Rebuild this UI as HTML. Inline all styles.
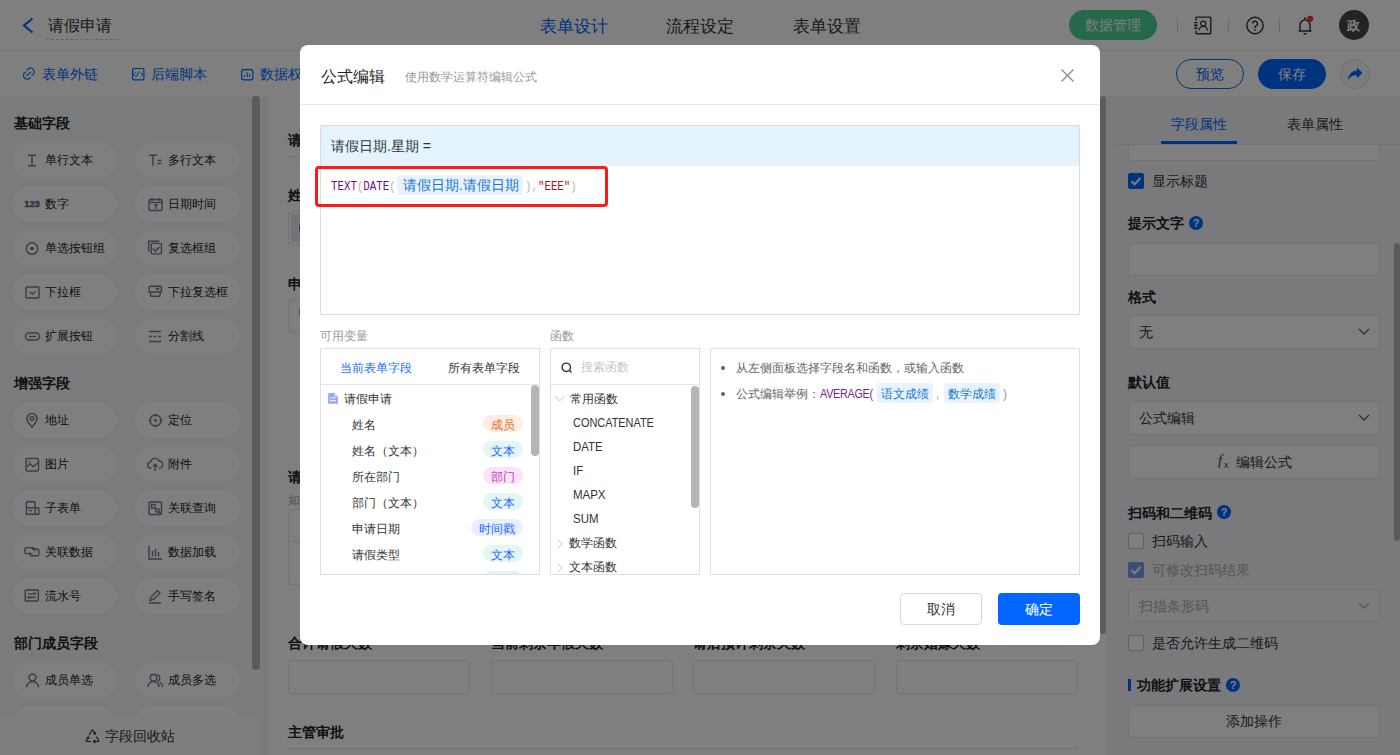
<!DOCTYPE html>
<html><head><meta charset="utf-8">
<style>
*{box-sizing:border-box;margin:0;padding:0}
html,body{width:1400px;height:755px;overflow:hidden}
body{position:relative;font-family:"Liberation Sans",sans-serif;background:#fff;color:#333}
.a{position:absolute;white-space:nowrap}
.t12{font-size:12px;line-height:12px}
.t14{font-size:14px;line-height:14px}
.t16{font-size:16px;line-height:16px}
.b{font-weight:bold}
svg{position:absolute;overflow:visible}
/* left chips */
.chip{position:absolute;width:105px;height:34px;border-radius:17px;background:#fff}
.chip span{position:absolute;left:33px;top:11px;font-size:12px;line-height:12px;color:#222;white-space:nowrap}
.chip svg{left:16px;top:12px}
.inp{position:absolute;border:1px solid #e3e4e8;border-radius:4px;background:#fff}
.chk{position:absolute;width:16px;height:16px;border:1px solid #b8bcc6;border-radius:2px;background:#fff}
.chk.on{background:#0066ff;border-color:#0066ff}
.q{position:absolute;width:14px;height:14px;border-radius:7px;background:#0066ff;color:#fff;font-size:11px;line-height:14px;text-align:center;font-weight:bold}
.tag{position:absolute;height:17px;border-radius:8.5px;font-size:12px;line-height:12px;padding-top:4px;text-align:center;overflow:hidden}
</style></head><body>

<!-- HEADER -->
<div class="a" style="left:0;top:0;width:1400px;height:51px;border-bottom:1px solid #e8e8e8;background:#fff"></div>
<svg style="left:0;top:0" width="40" height="50"><polyline points="32.5,18.5 24,25.5 32.5,32.5" fill="none" stroke="#0066ff" stroke-width="2.2"/></svg>
<div class="a t16" style="left:48px;top:18px;color:#333">请假申请</div>
<div class="a" style="left:46px;top:39px;width:72px;border-top:1px dashed #c9c9c9"></div>
<div class="a" style="left:540px;top:18px;font-size:16.6px;line-height:17px;color:#0066ff">表单设计</div>
<div class="a" style="left:666px;top:18px;font-size:16.6px;line-height:17px;">流程设定</div>
<div class="a" style="left:793px;top:18px;font-size:16.6px;line-height:17px;">表单设置</div>

<div class="a" style="left:1069px;top:10px;width:88px;height:30px;border-radius:15px;background:#4cd094"></div>
<div class="a t14" style="left:1085px;top:18px;color:#fff">数据管理</div>
<div class="a" style="left:1177px;top:18px;width:1px;height:14px;background:#d5d5d5"></div>
<div class="a" style="left:1228px;top:18px;width:1px;height:14px;background:#d5d5d5"></div>
<div class="a" style="left:1279px;top:18px;width:1px;height:14px;background:#d5d5d5"></div>
<svg style="left:1190px;top:14px" width="24" height="24"><path d="M5.9 6.8V4.1a1 1 0 0 1 1-1h12.9a1 1 0 0 1 1 1v14.7a1 1 0 0 1-1 1H6.9a1 1 0 0 1-1-1v-2.4M5.9 10v0.8M5.9 13.2v0.8" fill="none" stroke="#333" stroke-width="1.4"/><path d="M4 8.7h3.7M4 11.5h3.7M4 14.3h3.7" stroke="#333" stroke-width="1.3"/><circle cx="13.3" cy="9.6" r="2.5" fill="none" stroke="#333" stroke-width="1.3"/><path d="M9.1 16.6a4.2 4.2 0 0 1 8.4 0" fill="none" stroke="#333" stroke-width="1.3"/></svg>
<svg style="left:1246px;top:17px" width="18" height="18"><circle cx="9" cy="8.5" r="8.2" fill="none" stroke="#333" stroke-width="1.4"/><path d="M6.6 6.6a2.4 2.4 0 1 1 3.4 2.2c-0.7 0.4-1 0.8-1 1.6v0.6" fill="none" stroke="#333" stroke-width="1.4"/><circle cx="9" cy="12.9" r="0.9" fill="#333"/></svg>
<svg style="left:1296px;top:15px" width="20" height="22"><path d="M2.5 16h13M4 16V10a5 5 0 0 1 10 0v6M7.5 18.8h3" fill="none" stroke="#333" stroke-width="1.4"/><circle cx="9" cy="3.2" r="1" fill="#333"/><circle cx="14.2" cy="3.8" r="3.1" fill="#e03a3a"/></svg>
<div class="a" style="left:1339px;top:10px;width:30px;height:30px;border-radius:15px;background:#464646"></div>
<div class="a" style="left:1347px;top:19px;font-size:13px;line-height:13px;color:#fff;font-weight:bold;font-family:'Liberation Serif',serif">政</div>

<!-- TOOLBAR -->
<div class="a" style="left:0;top:51px;width:1400px;height:45px;background:#fff"></div>
<svg style="left:22px;top:67px" width="14" height="14"><path d="M4.9 3.4A3.8 3.8 0 1 1 10 8.3M8.4 10.6A3.8 3.8 0 1 1 3.3 5.2M4.6 8.7L8.7 5.2" fill="none" stroke="#0066ff" stroke-width="1.1" stroke-linecap="round"/></svg>
<div class="a t14" style="left:42px;top:67px;color:#0066ff">表单外链</div>
<svg style="left:132px;top:68px" width="13" height="13"><rect x="0.6" y="0.5" width="11.3" height="11.3" rx="1.2" fill="none" stroke="#0066ff" stroke-width="1.2"/><path d="M3.6 4.2L1.2 6.4 4.3 8.6 7.3 3.2M8.5 4.5L11 6.4 8.8 8.5" fill="none" stroke="#0066ff" stroke-width="0.9"/></svg>
<div class="a t14" style="left:151px;top:67px;color:#0066ff">后端脚本</div>
<svg style="left:241px;top:69px" width="13" height="12"><rect x="0.6" y="0.6" width="11.3" height="10.3" rx="2.3" fill="none" stroke="#0066ff" stroke-width="1.2"/><path d="M3.4 8V6M6.3 8V3.2M8.6 8V4.8" fill="none" stroke="#0066ff" stroke-width="1"/></svg>
<div class="a t14" style="left:260px;top:67px;color:#0066ff">数据权限</div>
<div class="a" style="left:1176px;top:59px;width:68px;height:30px;border:1px solid #0066ff;border-radius:15px"></div>
<div class="a t14" style="left:1196px;top:67px;color:#0066ff">预览</div>
<div class="a" style="left:1258px;top:59px;width:68px;height:30px;border-radius:15px;background:#0066ff"></div>
<div class="a t14" style="left:1278px;top:67px;color:#fff">保存</div>
<div class="a" style="left:1340px;top:59px;width:30px;height:30px;border-radius:15px;border:1px solid #d6e2fb;background:#f2f6ff"></div>
<svg style="left:1345px;top:64px" width="20" height="20"><path d="M12 3.5L17.4 8.9 12 14.3V11.3C7.6 11.1 4.9 12.8 2.9 16 3.4 10.6 6.6 6.9 12 6.6Z" fill="#0066ff"/></svg>

<!-- LEFT PANEL -->
<div class="a" id="left" style="left:0;top:96px;width:262px;height:659px;background:#f5f6f9"></div>
<div class="a t14 b" style="left:14px;top:116px;color:#222">基础字段</div>
<div class="a t14 b" style="left:14px;top:376px;color:#222">增强字段</div>
<div class="a t14 b" style="left:14px;top:636px;color:#222">部门成员字段</div>
<div class="chip" style="left:12px;top:143px"><svg style="left:12px;top:9px" width="17" height="17" viewBox="0 0 17 17"><path d="M4 3.2h8M8 3.2v10.6M4 13.8h8" stroke="#6f7a92" stroke-width="1.4" fill="none" stroke-width="1.6"/></svg><span>单行文本</span></div>
<div class="chip" style="left:135px;top:143px"><svg style="left:12px;top:9px" width="17" height="17" viewBox="0 0 17 17"><path d="M2 3.2h8M6 3.2v10.6M10.5 8.5h4M10.5 11.5h4" stroke="#6f7a92" stroke-width="1.4" fill="none" stroke-width="1.5"/></svg><span>多行文本</span></div>
<div class="chip" style="left:12px;top:187px"><svg style="left:12px;top:9px" width="17" height="17" viewBox="0 0 17 17"><text x="0.3" y="10.8" style="font:bold 9.5px 'Liberation Sans';letter-spacing:-0.2px" fill="#5f6a80" stroke="#5f6a80" stroke-width="0.45">123</text></svg><span>数字</span></div>
<div class="chip" style="left:135px;top:187px"><svg style="left:12px;top:9px" width="17" height="17" viewBox="0 0 17 17"><rect x="2" y="3.5" width="13" height="11" rx="1.5" stroke="#6f7a92" stroke-width="1.4" fill="none"/><path d="M2 6.5h13M5 2v3M12 2v3M7 9h3l-1.8 4" stroke="#6f7a92" stroke-width="1.4" fill="none"/></svg><span>日期时间</span></div>
<div class="chip" style="left:12px;top:231px"><svg style="left:12px;top:9px" width="17" height="17" viewBox="0 0 17 17"><circle cx="8" cy="8.5" r="5.8" stroke="#6f7a92" stroke-width="1.4" fill="none"/><circle cx="8" cy="8.5" r="1.8" fill="#6f7a92"/></svg><span>单选按钮组</span></div>
<div class="chip" style="left:135px;top:231px"><svg style="left:12px;top:9px" width="17" height="17" viewBox="0 0 17 17"><path d="M1.7 11.7V1.2h10.5" stroke="#6f7a92" stroke-width="1.4" fill="none"/><rect x="4.3" y="3.4" width="10.1" height="10.5" rx="1" stroke="#6f7a92" stroke-width="1.4" fill="none"/><path d="M5.8 8.6l2.5 2.7 4.3-4.6" stroke="#6f7a92" stroke-width="1.4" fill="none"/></svg><span>复选框组</span></div>
<div class="chip" style="left:12px;top:275px"><svg style="left:12px;top:9px" width="17" height="17" viewBox="0 0 17 17"><rect x="2" y="3" width="13" height="11" rx="1" stroke="#6f7a92" stroke-width="1.4" fill="none"/><path d="M5.5 7.5l3 2.5 3-2.5" stroke="#6f7a92" stroke-width="1.4" fill="none"/></svg><span>下拉框</span></div>
<div class="chip" style="left:135px;top:275px"><svg style="left:12px;top:9px" width="17" height="17" viewBox="0 0 17 17"><path d="M2.1 8V3.3a1 1 0 0 1 1-1h10.3a1 1 0 0 1 1 1V8zM3.5 8v3.3a1 1 0 0 0 1 1h7.6a1 1 0 0 0 1-1V8" stroke="#6f7a92" stroke-width="1.4" fill="none"/><path d="M8.9 3.8l1.6 1.8 1.6-1.8" stroke="#6f7a92" stroke-width="1.4" fill="none"/></svg><span>下拉复选框</span></div>
<div class="chip" style="left:12px;top:319px"><svg style="left:12px;top:9px" width="17" height="17" viewBox="0 0 17 17"><rect x="1.5" y="5" width="14" height="7" rx="3.5" stroke="#6f7a92" stroke-width="1.4" fill="none"/><path d="M5 8.5h7" stroke="#6f7a92" stroke-width="1.4" fill="none"/></svg><span>扩展按钮</span></div>
<div class="chip" style="left:135px;top:319px"><svg style="left:12px;top:9px" width="17" height="17" viewBox="0 0 17 17"><path d="M2 3.5h12M2 8.5h3M6.5 8.5h3M11 8.5h3M2 13.5h12" stroke="#6f7a92" stroke-width="1.4" fill="none"/></svg><span>分割线</span></div>
<div class="chip" style="left:12px;top:403px"><svg style="left:12px;top:9px" width="17" height="17" viewBox="0 0 17 17"><path d="M8 15s-5-5-5-8.5a5 5 0 0 1 10 0C13 10 8 15 8 15z" stroke="#6f7a92" stroke-width="1.4" fill="none"/><circle cx="8" cy="6.5" r="1.8" stroke="#6f7a92" stroke-width="1.4" fill="none"/></svg><span>地址</span></div>
<div class="chip" style="left:135px;top:403px"><svg style="left:12px;top:9px" width="17" height="17" viewBox="0 0 17 17"><circle cx="8.5" cy="8.5" r="5.5" stroke="#6f7a92" stroke-width="1.4" fill="none"/><circle cx="8.5" cy="8.5" r="1.4" fill="#6f7a92"/><path d="M8.5 1.5v3M8.5 12.5v3M1.5 8.5h3M12.5 8.5h3" stroke="#6f7a92" stroke-width="1.4" fill="none"/></svg><span>定位</span></div>
<div class="chip" style="left:12px;top:447px"><svg style="left:12px;top:9px" width="17" height="17" viewBox="0 0 17 17"><rect x="2" y="2.5" width="12.5" height="12.5" rx="1.5" stroke="#6f7a92" stroke-width="1.4" fill="none"/><path d="M2.5 11l3.5-3 3 2.5 5.5-4" stroke="#6f7a92" stroke-width="1.4" fill="none"/><circle cx="5.3" cy="5.8" r="0.9" fill="#6f7a92"/></svg><span>图片</span></div>
<div class="chip" style="left:135px;top:447px"><svg style="left:12px;top:9px" width="17" height="17" viewBox="0 0 17 17"><path d="M4.5 12H4a3 3 0 0 1-0.5-6A4.5 4.5 0 0 1 12 5a3.5 3.5 0 0 1 0.5 7H12M8.2 15V8.5M6 10.5l2.2-2.2 2.2 2.2" stroke="#6f7a92" stroke-width="1.4" fill="none"/></svg><span>附件</span></div>
<div class="chip" style="left:12px;top:491px"><svg style="left:12px;top:9px" width="17" height="17" viewBox="0 0 17 17"><path d="M2.4 14.2V2.8a1 1 0 0 1 1-1h6.7a1 1 0 0 1 1 1v11.4zM11.1 7.7h2.7a1 1 0 0 1 1 1v5.5h-3.7M2.4 7.7h8.7M4.6 10.6h3.6" stroke="#6f7a92" stroke-width="1.4" fill="none"/></svg><span>子表单</span></div>
<div class="chip" style="left:135px;top:491px"><svg style="left:12px;top:9px" width="17" height="17" viewBox="0 0 17 17"><rect x="2" y="2" width="12.5" height="12.5" rx="1" stroke="#6f7a92" stroke-width="1.4" fill="none"/><rect x="4.5" y="4.5" width="3.5" height="3.5" stroke="#6f7a92" stroke-width="1.4" fill="none"/><circle cx="10.5" cy="10.5" r="1.8" stroke="#6f7a92" stroke-width="1.4" fill="none"/><path d="M11.8 11.8l2 2" stroke="#6f7a92" stroke-width="1.4" fill="none"/></svg><span>关联查询</span></div>
<div class="chip" style="left:12px;top:535px"><svg style="left:12px;top:9px" width="17" height="17" viewBox="0 0 17 17"><path d="M8.5 9.6H2.2a1.3 1.3 0 0 1-1.3-1.3V5a1.3 1.3 0 0 1 1.3-1.3h6.9A1.3 1.3 0 0 1 10.4 5v2.2M8 5.2h5.5a1.3 1.3 0 0 1 1.3 1.3v4a1.3 1.3 0 0 1-1.3 1.3H7.3A1.3 1.3 0 0 1 6 10.5V8.3" stroke="#6f7a92" stroke-width="1.4" fill="none"/></svg><span>关联数据</span></div>
<div class="chip" style="left:135px;top:535px"><svg style="left:12px;top:9px" width="17" height="17" viewBox="0 0 17 17"><path d="M2 2v13h13M5.5 7v5.5M8.5 5v7.5M11.5 8v4.5" stroke="#6f7a92" stroke-width="1.4" fill="none"/></svg><span>数据加载</span></div>
<div class="chip" style="left:12px;top:579px"><svg style="left:12px;top:9px" width="17" height="17" viewBox="0 0 17 17"><rect x="1.2" y="2" width="13.1" height="11" rx="1" stroke="#6f7a92" stroke-width="1.4" fill="none"/><path d="M4 5.9h7.5l-1.6-1.5M11.5 9.3H4l1.6 1.5" stroke="#6f7a92" stroke-width="1.4" fill="none"/></svg><span>流水号</span></div>
<div class="chip" style="left:135px;top:579px"><svg style="left:12px;top:9px" width="17" height="17" viewBox="0 0 17 17"><path d="M3 12.5l1-3.5 6.5-6.5 2.5 2.5-6.5 6.5zM2 15h12" stroke="#6f7a92" stroke-width="1.4" fill="none"/></svg><span>手写签名</span></div>
<div class="chip" style="left:12px;top:663px"><svg style="left:12px;top:9px" width="17" height="17" viewBox="0 0 17 17"><circle cx="8.5" cy="5.5" r="3.5" stroke="#6f7a92" stroke-width="1.4" fill="none"/><path d="M2.5 15.5a6 6 0 0 1 12 0" stroke="#6f7a92" stroke-width="1.4" fill="none"/></svg><span>成员单选</span></div>
<div class="chip" style="left:135px;top:663px"><svg style="left:12px;top:9px" width="17" height="17" viewBox="0 0 17 17"><circle cx="6.5" cy="5.8" r="3.3" stroke="#6f7a92" stroke-width="1.4" fill="none"/><path d="M1 15a5.5 5.5 0 0 1 11 0M10 2.6a3.3 3.3 0 0 1 0.5 6.4M12.5 10a5.5 5.5 0 0 1 3 5" stroke="#6f7a92" stroke-width="1.4" fill="none"/></svg><span>成员多选</span></div>
<div class="chip" style="left:12px;top:707px"><svg style="left:12px;top:9px" width="17" height="17" viewBox="0 0 17 17"></svg><span>部门单选</span></div>
<div class="chip" style="left:135px;top:707px"><svg style="left:12px;top:9px" width="17" height="17" viewBox="0 0 17 17"></svg><span>部门多选</span></div>
<div class="a" style="left:0;top:717px;width:260px;height:38px;background:#fafbfc"></div>
<svg style="left:84px;top:728px" width="17" height="17" viewBox="0 0 17 17"><path d="M5 7.2L7.8 2.5c.3-.5.9-.5 1.2 0L11.2 6M9.4 5.6l1.8.5.5-1.9M12.4 8.6l2.2 3.8c.3.5 0 1.1-.6 1.1H9.6M11.2 11.9l-1.6 1.6 1.6 1.5M6.8 13.5H3c-.6 0-.9-.6-.6-1.1L4.4 9M2.7 9.8l1.7-.8.8 1.7" fill="none" stroke="#333" stroke-width="1.2"/></svg>
<div class="a t14" style="left:105px;top:729px;color:#333">字段回收站</div>

<div class="a" style="left:252px;top:96px;width:8px;height:574px;border-radius:4px;background:#b4b4b4"></div>

<!-- CENTER -->
<div class="a" style="left:262px;top:96px;width:838px;height:659px;background:#f3f4f7"></div>
<div class="a" style="left:268px;top:96px;width:838px;height:659px;background:#fff"></div>
<div class="a t14 b" style="left:288px;top:133px;color:#222">请假信息</div>
<div class="a" style="left:288px;top:156px;width:790px;height:1px;background:#e6e6e6"></div>
<div class="a t14 b" style="left:288px;top:188px;color:#222">姓名</div>
<div class="a" style="left:288px;top:211px;width:380px;height:34px;border:1px dashed #d6d8dd;border-radius:4px"></div>
<div class="a" style="left:291px;top:214px;width:120px;height:28px;border-radius:3px;background:#eee2f4"></div>
<div class="a" style="left:299px;top:224px;width:4px;height:8px;border-radius:2px;background:#2fa86a"></div>
<div class="a t14 b" style="left:288px;top:277px;color:#222">申请日期</div>
<div class="inp" style="left:288px;top:299px;width:380px;height:34px"></div>
<div class="a" style="left:299px;top:309px;width:1px;height:6px;background:#f0a040"></div>
<div class="a t14 b" style="left:288px;top:470px;color:#222">请假事由</div>
<div class="a t12" style="left:288px;top:494px;color:#aaa">如：家中有事</div>
<div class="inp" style="left:288px;top:509px;width:790px;height:76px"></div>
<div class="a" style="left:289px;top:541px;width:788px;height:1px;background:#e6e6e6"></div>
<div class="a t14 b" style="left:288px;top:636px;color:#222">合计请假天数</div>
<div class="inp" style="left:288px;top:660px;width:182px;height:34px"></div>
<div class="a t14 b" style="left:491px;top:636px;color:#222">当前剩余年假天数</div>
<div class="inp" style="left:491px;top:660px;width:182px;height:34px"></div>
<div class="a t14 b" style="left:693px;top:636px;color:#222">请后预计剩余天数</div>
<div class="inp" style="left:693px;top:660px;width:182px;height:34px"></div>
<div class="a t14 b" style="left:896px;top:636px;color:#222">剩余婚嫁天数</div>
<div class="inp" style="left:896px;top:660px;width:182px;height:34px"></div>
<div class="a t14 b" style="left:288px;top:725px;color:#222">主管审批</div>
<div class="a" style="left:288px;top:748px;width:790px;height:1px;background:#e6e6e6"></div>

<div class="a" style="left:1100px;top:96px;width:6px;height:538px;border-radius:3px;background:#b9b9b9"></div>

<!-- RIGHT PANEL -->
<div class="a" style="left:1106px;top:96px;width:294px;height:659px;background:#f4f5f8"></div>
<div class="inp" style="left:1128px;top:120px;width:252px;height:41px"></div>
<div class="a" style="left:1106px;top:96px;width:288px;height:48px;background:#f4f5f8"></div>
<div class="a t14" style="left:1171px;top:117px;color:#0066ff">字段属性</div>
<div class="a t14" style="left:1287px;top:117px;color:#333">表单属性</div>
<div class="a" style="left:1114px;top:144px;width:286px;height:1px;background:#e2e4e9"></div>
<div class="a" style="left:1161px;top:141px;width:76px;height:3px;background:#0066ff"></div>
<div class="chk on" style="left:1128px;top:173px"></div><svg style="left:1128px;top:173px" width="16" height="16"><path d="M3.5 8.2l3 3 6-6.2" fill="none" stroke="#fff" stroke-width="2"/></svg>
<div class="a t14" style="left:1152px;top:174px;color:#333">显示标题</div>
<div class="a t14 b" style="left:1128px;top:216px;color:#222">提示文字</div>
<div class="q" style="left:1189px;top:216px">?</div>
<div class="inp" style="left:1128px;top:243px;width:252px;height:33px"></div>
<div class="a t14 b" style="left:1128px;top:290px;color:#222">格式</div>
<div class="inp" style="left:1128px;top:315px;width:252px;height:34px"></div>
<div class="a t14" style="left:1139px;top:325px;color:#333">无</div>
<svg style="left:1358px;top:328px" width="12" height="8"><path d="M1 1l5 5 5-5" fill="none" stroke="#666" stroke-width="1.3"/></svg>
<div class="a t14 b" style="left:1128px;top:375px;color:#222">默认值</div>
<div class="inp" style="left:1128px;top:401px;width:252px;height:34px"></div>
<div class="a t14" style="left:1139px;top:411px;color:#333">公式编辑</div>
<svg style="left:1358px;top:414px" width="12" height="8"><path d="M1 1l5 5 5-5" fill="none" stroke="#666" stroke-width="1.3"/></svg>
<div class="inp" style="left:1128px;top:445px;width:252px;height:34px"></div>
<div class="a" style="left:1218px;top:453px;font-size:15px;line-height:15px;font-style:italic;font-family:'Liberation Serif',serif;color:#444">f</div><div class="a" style="left:1224px;top:461px;font-size:9px;line-height:9px;color:#444">x</div>
<div class="a t14" style="left:1236px;top:455px;color:#333">编辑公式</div>
<div class="a t14 b" style="left:1128px;top:506px;color:#222">扫码和二维码</div>
<div class="q" style="left:1217px;top:505px">?</div>
<div class="chk" style="left:1128px;top:533px"></div>
<div class="a t14" style="left:1152px;top:534px;color:#333">扫码输入</div>
<div class="chk on" style="left:1128px;top:562px;background:#7a9be6;border-color:#7a9be6"></div><svg style="left:1128px;top:562px" width="16" height="16"><path d="M3.5 8.2l3 3 6-6.2" fill="none" stroke="#fff" stroke-width="2"/></svg>
<div class="a t14" style="left:1152px;top:563px;color:#a8abb2">可修改扫码结果</div>
<div class="inp" style="left:1128px;top:589px;width:252px;height:33px;background:#f7f8fa"></div>
<div class="a t14" style="left:1139px;top:599px;color:#a8abb2">扫描条形码</div>
<svg style="left:1358px;top:602px" width="12" height="8"><path d="M1 1l5 5 5-5" fill="none" stroke="#b0b0b0" stroke-width="1.3"/></svg>
<div class="chk" style="left:1128px;top:635px"></div>
<div class="a t14" style="left:1152px;top:636px;color:#333">是否允许生成二维码</div>
<div class="a" style="left:1128px;top:679px;width:3px;height:12px;background:#0066ff"></div>
<div class="a t14 b" style="left:1137px;top:678px;color:#222">功能扩展设置</div>
<div class="q" style="left:1226px;top:678px">?</div>
<div class="inp" style="left:1128px;top:705px;width:252px;height:33px"></div>
<div class="a t14" style="left:1226px;top:714px;color:#333">添加操作</div>
<div class="a" style="left:1394px;top:243px;width:6px;height:298px;border-radius:3px;background:#b4b4b4"></div>


<!-- OVERLAY -->
<div class="a" style="left:0;top:0;width:1400px;height:755px;background:rgba(0,0,0,0.5)"></div>

<!-- MODAL -->
<div class="a" id="modal" style="left:300px;top:45px;width:800px;height:600px;border-radius:8px;background:#fff"></div>
<div class="a t16" style="left:321px;top:69px;color:#262626">公式编辑</div>
<div class="a t12" style="left:405px;top:71px;color:#999">使用数学运算符编辑公式</div>
<svg style="left:1060px;top:68px" width="15" height="15"><path d="M1.5 1.5l12 12M13.5 1.5l-12 12" stroke="#8c8c8c" stroke-width="1.3"/></svg>
<div class="a" style="left:300px;top:104px;width:800px;height:1px;background:#e8e8e8"></div>
<div class="a" style="left:320px;top:125px;width:760px;height:190px;border:1px solid #dcdcdc"></div>
<div class="a" style="left:321px;top:126px;width:758px;height:40px;background:#e5f3fe"></div>
<div class="a t14" style="left:331px;top:139px;color:#333">请假日期.星期 =</div>
<div class="a" style="left:331px;top:181px;font-family:'Liberation Mono',monospace;font-size:12.4px;line-height:12px;transform:scaleX(0.87);transform-origin:0 0"><span style="color:#680f8a">TEXT</span><span style="color:#c8b496">(</span><span style="color:#680f8a">DATE</span><span style="color:#c8b496">(</span></div>
<div class="a" style="left:397px;top:175px;width:126px;height:20px;border-radius:3px;background:#e8f3ff"></div>
<div class="a t14" style="left:403px;top:178px;color:#1677d2">请假日期.请假日期</div>
<div class="a" style="left:525px;top:181px;font-family:'Liberation Mono',monospace;font-size:12.4px;line-height:12px;transform:scaleX(0.87);transform-origin:0 0"><span style="color:#c8b496">),</span><span style="color:#a31515">"EEE"</span><span style="color:#c8b496">)</span></div>
<div class="a" style="left:315px;top:166px;width:293px;height:41px;border:3px solid #ff1a1a;border-radius:4px"></div>
<div class="a t12" style="left:320px;top:330px;color:#999">可用变量</div>
<div class="a t12" style="left:550px;top:330px;color:#999">函数</div>
<div class="a" style="left:320px;top:348px;width:220px;height:227px;border:1px solid #e0e0e0"></div>
<div class="a t12" style="left:340px;top:362px;color:#1a6dff">当前表单字段</div>
<div class="a t12" style="left:448px;top:362px;color:#333">所有表单字段</div>
<div class="a" style="left:321px;top:384px;width:218px;height:1px;background:#e6e6e6"></div>
<div class="a" style="left:531px;top:385px;width:8px;height:71px;border-radius:4px;background:#b5b5b5"></div>
<svg style="left:327px;top:392px" width="12" height="13"><path d="M1.1 1H7.3L10.9 4.6V11.8H1.1z" fill="#9aa8fb"/><path d="M7.3 1V4.6H10.9z" fill="#d4dafd"/><path d="M2.9 5.9h2.3M6 5.9h2.4M2.9 8.7h6" stroke="#fff" stroke-width="1"/></svg>
<div class="a t12" style="left:344px;top:393px;color:#333">请假申请</div>
<div class="a t12" style="left:352px;top:419px;color:#333">姓名</div>
<div class="tag" style="left:483px;top:415px;width:40px;color:#f06a1a;background:#fdeee4">成员</div>
<div class="a t12" style="left:352px;top:445px;color:#333">姓名（文本）</div>
<div class="tag" style="left:483px;top:441px;width:40px;color:#1f66ff;background:#e4f6f4">文本</div>
<div class="a t12" style="left:352px;top:471px;color:#333">所在部门</div>
<div class="tag" style="left:483px;top:467px;width:40px;color:#d02fc4;background:#fbe4f8">部门</div>
<div class="a t12" style="left:352px;top:497px;color:#333">部门（文本）</div>
<div class="tag" style="left:483px;top:493px;width:40px;color:#1f66ff;background:#e4f6f4">文本</div>
<div class="a t12" style="left:352px;top:523px;color:#333">申请日期</div>
<div class="tag" style="left:471px;top:519px;width:52px;color:#1f66ff;background:#e8f0ff">时间戳</div>
<div class="a t12" style="left:352px;top:549px;color:#333">请假类型</div>
<div class="tag" style="left:483px;top:545px;width:40px;color:#1f66ff;background:#e4f6f4">文本</div>
<div class="a t12" style="left:352px;top:575px;color:#333">请假天数</div>
<div class="tag" style="left:483px;top:571px;width:40px;color:#1f66ff;background:#e4f6f4">文本</div>
<div class="a" style="left:321px;top:574px;width:218px;height:20px;background:#fff"></div>
<div class="a" style="left:320px;top:574px;width:220px;height:1px;background:#e0e0e0"></div>
<div class="a" style="left:550px;top:348px;width:150px;height:227px;border:1px solid #e0e0e0"></div>
<svg style="left:561px;top:362px" width="13" height="13"><circle cx="5.3" cy="5.3" r="4.2" fill="none" stroke="#333" stroke-width="1.4"/><path d="M8.3 8.3l2.2 2.2" stroke="#333" stroke-width="1.4"/></svg>
<div class="a t12" style="left:581px;top:361px;color:#c8c8c8">搜索函数</div>
<div class="a" style="left:551px;top:384px;width:148px;height:1px;background:#e6e6e6"></div>
<div class="a" style="left:691px;top:386px;width:8px;height:122px;border-radius:4px;background:#b5b5b5"></div>
<svg style="left:554px;top:395px" width="12" height="8"><path d="M1 1l4.7 5 4.7-5" fill="none" stroke="#c8c8c8" stroke-width="1"/></svg>
<div class="a t12" style="left:570px;top:393px;color:#333">常用函数</div>
<div class="a t12" style="left:573px;top:417px;color:#333;transform:scaleX(0.91);transform-origin:0 0">CONCATENATE</div>
<div class="a t12" style="left:573px;top:441px;color:#333;transform:scaleX(0.955);transform-origin:0 0">DATE</div>
<div class="a t12" style="left:573px;top:465px;color:#333;transform:scaleX(0.955);transform-origin:0 0">IF</div>
<div class="a t12" style="left:573px;top:489px;color:#333;transform:scaleX(0.955);transform-origin:0 0">MAPX</div>
<div class="a t12" style="left:573px;top:513px;color:#333;transform:scaleX(0.955);transform-origin:0 0">SUM</div>
<svg style="left:556px;top:539px" width="8" height="10"><path d="M2 1l4 4-4 4" fill="none" stroke="#c8c8c8" stroke-width="1"/></svg>
<div class="a t12" style="left:569px;top:537px;color:#333">数学函数</div>
<svg style="left:556px;top:563px" width="8" height="10"><path d="M2 1l4 4-4 4" fill="none" stroke="#c8c8c8" stroke-width="1"/></svg>
<div class="a t12" style="left:569px;top:561px;color:#333">文本函数</div>
<div class="a" style="left:710px;top:348px;width:370px;height:227px;border:1px solid #e0e0e0"></div>
<div class="a" style="left:721px;top:366px;width:4px;height:4px;border-radius:2px;background:#5b6272"></div>
<div class="a" style="left:721px;top:392px;width:4px;height:4px;border-radius:2px;background:#5b6272"></div>
<div class="a t12" style="left:736px;top:362px;color:#666">从左侧面板选择字段名和函数，或输入函数</div>
<div class="a t12" style="left:736px;top:388px;color:#666">公式编辑举例：</div>
<div class="a t12" style="left:820px;top:388px;color:#7a1f8c;letter-spacing:-0.3px;transform:scaleX(0.9);transform-origin:0 0">AVERAGE(</div>
<div class="a" style="left:877px;top:383px;width:56px;height:20px;border-radius:3px;background:#e8f3ff"></div>
<div class="a t12" style="left:881px;top:388px;color:#1677d2">语文成绩</div>
<div class="a t12" style="left:936px;top:388px;color:#999">,</div>
<div class="a" style="left:944px;top:383px;width:56px;height:20px;border-radius:3px;background:#e8f3ff"></div>
<div class="a t12" style="left:948px;top:388px;color:#1677d2">数学成绩</div>
<div class="a t12" style="left:1003px;top:388px;color:#999">)</div>
<div class="a" style="left:900px;top:593px;width:82px;height:32px;border:1px solid #d9d9d9;border-radius:4px;background:#fff"></div>
<div class="a t14" style="left:927px;top:602px;color:#333">取消</div>
<div class="a" style="left:998px;top:593px;width:82px;height:32px;border-radius:4px;background:#0066ff"></div>
<div class="a t14" style="left:1025px;top:602px;color:#fff">确定</div>


</body></html>
